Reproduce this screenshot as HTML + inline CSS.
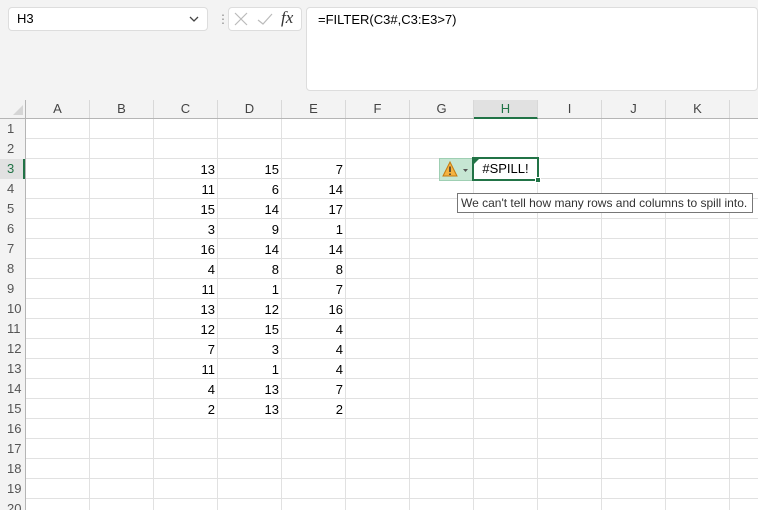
<!DOCTYPE html>
<html><head><style>
*{margin:0;padding:0;box-sizing:border-box}
html,body{width:758px;height:510px;overflow:hidden}
body{background:#f3f3f3;font-family:"Liberation Sans",sans-serif;position:relative}
.a{position:absolute}
#grid{left:26px;top:119px;width:732px;height:391px;background:#fff;
background-image:repeating-linear-gradient(90deg,transparent 0 63px,#e1e1e1 63px 64px),repeating-linear-gradient(180deg,transparent 0 19px,#e1e1e1 19px 20px)}
.ch{top:100px;width:64px;height:18px;text-align:center;font-size:13px;color:#444;line-height:18px;border-right:1px solid #d8d8d8}
.rh{left:0;width:25px;height:20px;font-size:13px;color:#555;line-height:20px;padding-left:7px}
.n{width:60px;text-align:right;font-size:13px;line-height:20px;color:#000}
</style></head><body>
<div class="a" style="left:8px;top:7px;width:200px;height:24px;background:#fff;border:1px solid #ddd;border-radius:4px;font-size:13px;line-height:22px;padding-left:8px">H3</div>
<svg class="a" style="left:188px;top:14px" width="12" height="10"><path d="M2 3 L6 7 L10 3" stroke="#444" stroke-width="1.3" fill="none"/></svg>
<div class="a" style="left:217px;top:13px;color:#888;font-size:12px;line-height:12px">⋮</div>
<div class="a" style="left:228px;top:7px;width:74px;height:24px;background:#fff;border:1px solid #ddd;border-radius:4px"></div>
<svg class="a" style="left:234px;top:12px" width="40" height="14"><path d="M1 1L13 13M13 1L1 13" stroke="#bbb" stroke-width="1.2"/><path d="M24 8L29 12L38 2" stroke="#bbb" stroke-width="1.2" fill="none"/></svg>
<div class="a" style="left:281px;top:8px;font-family:'Liberation Serif',serif;font-style:italic;font-size:17px;color:#333">fx</div>
<div class="a" style="left:306px;top:7px;width:452px;height:84px;background:#fff;border:1px solid #ddd;border-radius:4px;font-size:13px;padding:4px 0 0 11px">=FILTER(C3#,C3:E3&gt;7)</div>
<div class="a" style="left:0;top:118px;width:758px;height:1px;background:#b5b5b5"></div>
<div class="a" style="left:25px;top:100px;width:1px;height:410px;background:#b5b5b5"></div>
<svg class="a" style="left:13px;top:105px" width="11" height="11"><path d="M10 0L10 10L0 10Z" fill="#d5d5d5"/></svg>
<div id="grid" class="a"></div>
<div class="a ch" style="left:26px">A</div><div class="a ch" style="left:90px">B</div><div class="a ch" style="left:154px">C</div><div class="a ch" style="left:218px">D</div><div class="a ch" style="left:282px">E</div><div class="a ch" style="left:346px">F</div><div class="a ch" style="left:410px">G</div><div class="a ch" style="left:474px;background:#e1e1e1;border-bottom:2px solid #217346;height:19px;color:#217346">H</div><div class="a ch" style="left:538px">I</div><div class="a ch" style="left:602px">J</div><div class="a ch" style="left:666px">K</div><div class="a ch" style="left:730px"></div>
<div class="a rh" style="top:119px">1</div><div class="a rh" style="top:139px">2</div><div class="a rh" style="top:159px;background:#e1e1e1;border-right:2px solid #217346;color:#217346">3</div><div class="a rh" style="top:179px">4</div><div class="a rh" style="top:199px">5</div><div class="a rh" style="top:219px">6</div><div class="a rh" style="top:239px">7</div><div class="a rh" style="top:259px">8</div><div class="a rh" style="top:279px">9</div><div class="a rh" style="top:299px">10</div><div class="a rh" style="top:319px">11</div><div class="a rh" style="top:339px">12</div><div class="a rh" style="top:359px">13</div><div class="a rh" style="top:379px">14</div><div class="a rh" style="top:399px">15</div><div class="a rh" style="top:419px">16</div><div class="a rh" style="top:439px">17</div><div class="a rh" style="top:459px">18</div><div class="a rh" style="top:479px">19</div><div class="a rh" style="top:499px">20</div>
<div class="a n" style="left:155px;top:160px">13<br>11<br>15<br>3<br>16<br>4<br>11<br>13<br>12<br>7<br>11<br>4<br>2</div>
<div class="a n" style="left:219px;top:160px">15<br>6<br>14<br>9<br>14<br>8<br>1<br>12<br>15<br>3<br>1<br>13<br>13</div>
<div class="a n" style="left:283px;top:160px">7<br>14<br>17<br>1<br>14<br>8<br>7<br>16<br>4<br>4<br>4<br>7<br>2</div>
<div class="a" style="left:439px;top:158px;width:34px;height:23px;background:#c6e6d3;border:1px solid #9fcfb3"></div>
<svg class="a" style="left:442px;top:161px" width="30" height="18"><path d="M8 1L15 15L1 15Z" fill="#f5b342" stroke="#c47a10" stroke-width="1"/><path d="M8 5.5V11M8 12.5V14" stroke="#333" stroke-width="1.5"/><path d="M21 8L26 8L23.5 11Z" fill="#555"/></svg>
<div class="a" style="left:472px;top:157px;width:67px;height:24px;border:2px solid #217346;background:#fff;font-size:13px;line-height:20px;text-align:center">#SPILL!</div>
<svg class="a" style="left:474px;top:159px" width="6" height="6"><path d="M0 0H5L0 5Z" fill="#217346"/></svg>
<div class="a" style="left:535px;top:177px;width:6px;height:6px;background:#217346;border:1px solid #fff"></div>
<div class="a" style="left:457px;top:193px;width:296px;height:20px;background:#fff;border:1px solid #777;font-size:12px;line-height:18px;padding-left:3px;color:#333;white-space:nowrap">We can't tell how many rows and columns to spill into.</div>
</body></html>
